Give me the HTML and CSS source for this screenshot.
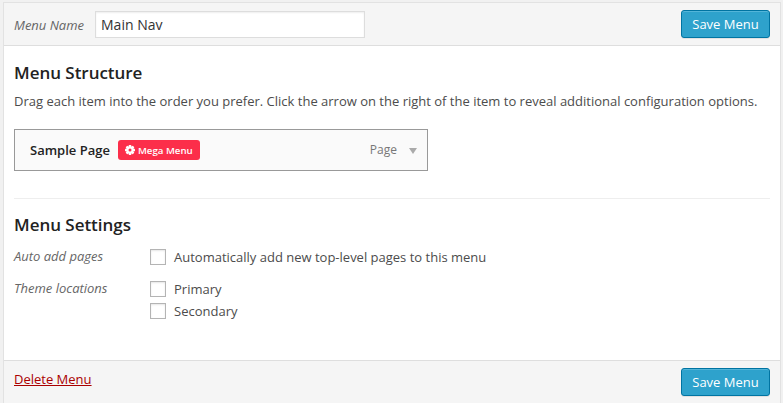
FILE: index.html
```html
<!DOCTYPE html>
<html lang="en">
<head>
<meta charset="utf-8">
<title>Menus</title>
<link rel="stylesheet" href="styles.css">
</head>
<body>
<form class="menu-edit">
  <header class="bar bar-top">
    <label class="name-label" for="menu-name">Menu Name</label>
    <input class="name-input" id="menu-name" type="text" value="Main Nav">
    <button class="save" type="button">Save Menu</button>
  </header>
  <main class="content">
    <h3>Menu Structure</h3>
    <p class="hint">Drag each item into the order you prefer. Click the arrow on the right of the item to reveal additional configuration options.</p>
    <div class="item">
      <span class="item-title">Sample Page</span>
      <span class="mega"><svg class="gear" viewBox="0 0 20 20"><g fill="#fff"><rect x="7.500" y="0" width="5" height="20" rx="1"/><rect x="7.500" y="0" width="5" height="20" rx="1" transform="rotate(45 10 10)"/><rect x="7.500" y="0" width="5" height="20" rx="1" transform="rotate(90 10 10)"/><rect x="7.500" y="0" width="5" height="20" rx="1" transform="rotate(135 10 10)"/><circle cx="10" cy="10" r="7.400"/></g><circle cx="10" cy="10" r="3" fill="#fc2e4a"/></svg><span class="mega-text">Mega Menu</span></span>
      <span class="item-type">Page</span>
      <span class="arrow"></span>
    </div>
    <section class="settings">
      <h3>Menu Settings</h3>
      <div class="row">
        <span class="row-label">Auto add pages</span>
        <div class="options"><label><input type="checkbox">Automatically add new top-level pages to this menu</label></div>
      </div>
      <div class="row">
        <span class="row-label">Theme locations</span>
        <div class="options">
          <label><input type="checkbox">Primary</label>
          <label><input type="checkbox">Secondary</label>
        </div>
      </div>
    </section>
  </main>
  <footer class="bar bar-bottom">
    <a class="delete" href="#">Delete Menu</a>
    <button class="save" type="button">Save Menu</button>
  </footer>
</form>
</body>
</html>
```
FILE: styles.css
```css
* { box-sizing: border-box; }
body {
  margin: 0;
  height: 403px;
  overflow: hidden;
  background: #f1f1f1;
  color: #4c4c4c;
  font: 13px/20px "Open Sans", sans-serif;
}
.menu-edit {
  margin: 2px 2px 0 3px;
  height: 401px;
  display: flex;
  flex-direction: column;
  border: 1px solid #e2e2e2;
  border-bottom: 0;
}
.bar { display: flex; padding: 0 10px; background: #f5f5f5; }
.bar-top { height: 43px; align-items: center; border-bottom: 1px solid #dedede; }
.bar-bottom { height: 43px; padding-top: 7px; border-top: 1px solid #dedede; }
.name-label, .row-label { color: #666; font-style: italic; }
.name-label { padding-top: 1px; }
.name-input {
  width: 270px;
  height: 27px;
  margin-left: 11px;
  padding: 0 5px;
  border: 1px solid #ddd;
  background: #fff;
  box-shadow: inset 0 1px 2px rgba(0, 0, 0, .07);
  color: #333;
  font: 14px "Open Sans", sans-serif;
}
.save {
  width: 89px;
  height: 28px;
  margin-left: auto;
  padding: 0;
  border: 1px solid #0074a2;
  border-radius: 3px;
  background: #2ea2cc;
  box-shadow: inset 0 1px 0 rgba(120, 200, 230, .5), 0 1px 0 rgba(0, 0, 0, .08);
  color: #fff;
  font: 13px/26px "Open Sans", sans-serif;
}
.content { flex: 1; padding: 16px 10px 0; background: #fff; }
h3 { margin: 0; color: #222; font-size: 17px; font-weight: 600; line-height: 22px; letter-spacing: -.03px; }
.hint { margin: 7px 0 18px; white-space: nowrap; }
.item {
  display: flex;
  align-items: center;
  width: 414px;
  height: 42px;
  padding: 0 10px 0 15px;
  border: 1px solid #999;
  background: #fafafa;
}
.item-title { color: #222; font-weight: 600; }
.mega {
  display: flex;
  align-items: center;
  width: 82px;
  height: 20px;
  margin-left: 8px;
  padding-left: 7px;
  border-radius: 3px;
  background: #fc2e4a;
  color: #fff;
  font-size: 9.7px;
  font-weight: 600;
}
.mega-text { padding-top: 2px; white-space: nowrap; }
.gear { width: 10px; height: 10px; margin-right: 3px; }
.item-type { margin-left: auto; color: #777; font-size: 12px; }
.arrow {
  margin: 2px 0 0 12px;
  border: 4px solid transparent;
  border-top: 6px solid #aaa;
  border-bottom: 0;
}
.settings { margin-top: 27px; padding-top: 15px; border-top: 1px solid #eee; }
.row { display: flex; margin-top: 10px; }
.row-label { width: 136px; }
.options label { display: flex; align-items: center; height: 22px; }
.options input {
  appearance: none;
  width: 16px;
  height: 16px;
  margin: 0 8px 0 0;
  border: 1px solid #b4b4b4;
  background: #fff;
  box-shadow: inset 0 1px 2px rgba(0, 0, 0, .1);
}
.delete { height: 20px; margin-top: 1px; color: #a00; text-decoration: underline; }
```
